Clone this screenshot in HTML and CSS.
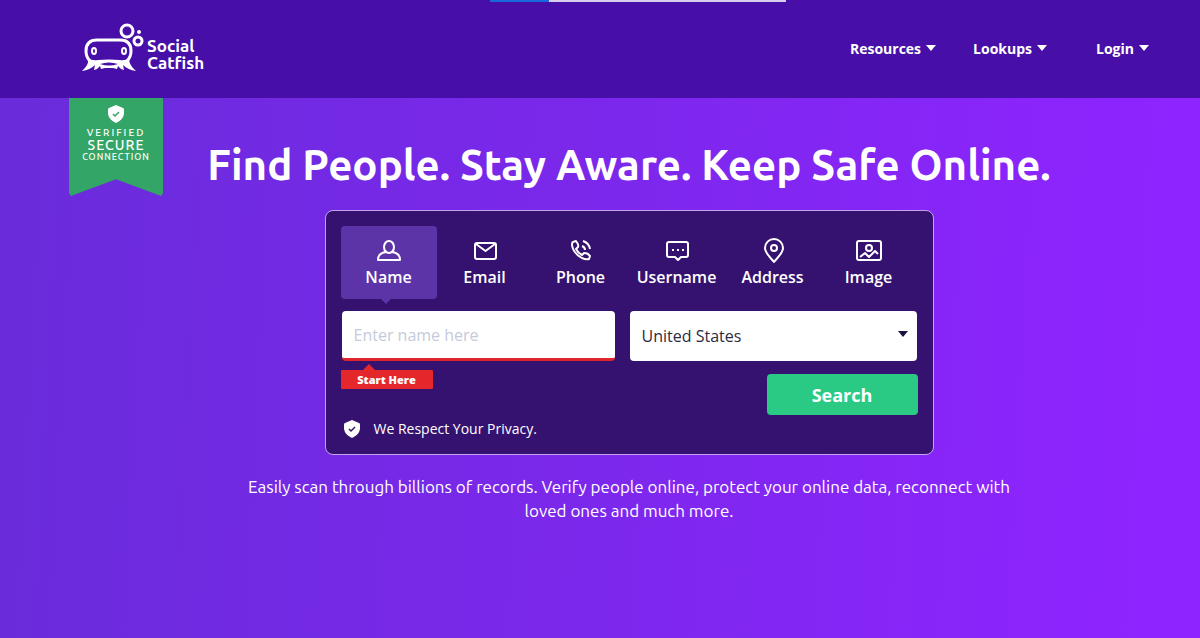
FILE: index.html
```html
<!DOCTYPE html>
<html lang="en">
<head>
<meta charset="UTF-8">
<meta name="viewport" content="width=device-width, initial-scale=1">
<title>Social Catfish</title>
<link rel="stylesheet" href="styles.css">
</head>
<body>
	<header class="header">
		<div class="progress"><div class="progress-bar"></div></div>
		<a class="logo" href="#">
			<svg width="62" height="50" viewBox="0 0 62 50" fill="none" stroke="#fff" aria-hidden="true">
				<path d="M8 38 Q4 34 4 28 Q4 17 15 17 H38 Q49 17 49 28 Q49 34 45 38" stroke-width="3"/>
				<path d="M6 35 C7 41 4 44 0 48 Q8 47 13 42 L12 47 Q16 46 18 43 L19 46 L23 45 H31 L35 46 L36 43 Q38 46 42 47 L41 42 Q46 47 54 48 C50 44 47 41 47 35 Q43 38 38 37 Q27 36 16 37 Q10 38 6 35 Z" fill="#fff" stroke="none"/>
				<path d="M18 41 Q27 38 36 41 Q27 44 18 41 Z" fill="#470fa8" stroke="none"/>
				<ellipse cx="12" cy="28" rx="2" ry="3" stroke-width="2"/>
				<ellipse cx="42" cy="28" rx="2" ry="3" stroke-width="2"/>
				<circle cx="45" cy="8" r="6" stroke-width="3"/>
				<circle cx="56" cy="18" r="4" stroke-width="3"/>
				<circle cx="57" cy="9" r="2" fill="#fff" stroke="none"/>
			</svg>
			<span class="logo-text">Social<br>Catfish</span>
		</a>
		<nav class="nav">
			<a href="#">Resources <span class="caret"></span></a>
			<a href="#">Lookups <span class="caret"></span></a>
			<a class="login" href="#">Login <span class="caret"></span></a>
		</nav>
	</header>

	<main class="hero">
		<div class="badge">
			<svg width="16" height="18" viewBox="0 0 16 18" aria-hidden="true">
				<path d="M8 0 L15 3 Q16 3 16 5 V9 Q15 15 8 18 Q1 15 0 9 V5 Q0 3 1 3 Z" fill="#fff"/>
				<path d="M5 9 L7 11 L11 7" fill="none" stroke="#33a566" stroke-width="1.5"/>
			</svg>
			<span class="badge-verified">VERIFIED</span>
			<span class="badge-secure">SECURE</span>
			<span class="badge-connection">CONNECTION</span>
		</div>

		<div class="content">
			<h1>Find People. Stay Aware. Keep Safe Online.</h1>

			<form class="search">
				<div class="tabs">
					<button type="button" class="tab active">
						<svg width="26" height="26" viewBox="0 0 26 26"><ellipse cx="13" cy="10" rx="5" ry="6"/><path d="M10 15 Q2 16 2 23 H24 Q24 16 16 15"/></svg>
						Name
					</button>
					<button type="button" class="tab">
						<svg width="26" height="26" viewBox="0 0 26 26"><rect x="3" y="6" width="21" height="16" rx="2"/><path d="M4 7 L13.5 14 L23 7"/></svg>
						Email
					</button>
					<button type="button" class="tab">
						<svg width="26" height="26" viewBox="0 0 26 26"><path d="M5 5 L8 4 Q11 8 10 10 L8 12 Q10 16 14 18 L16 16 Q20 16 22 19 L21 22 Q18 23 14 21 Q5 16 4 8 Q4 5 5 5 Z"/><path d="M14 9 Q17 10 17 13 M15 4 Q21 6 22 12"/></svg>
						Phone
					</button>
					<button type="button" class="tab">
						<svg width="26" height="26" viewBox="0 0 26 26"><path d="M5 5 H22 Q24 5 24 7 V18 Q24 20 22 20 H17 L14 23 L11 20 H5 Q3 20 3 18 V7 Q3 5 5 5 Z"/><path d="M8 13 H10 M13 13 H15 M18 13 H20"/></svg>
						Username
					</button>
					<button type="button" class="tab">
						<svg width="26" height="26" viewBox="0 0 26 26"><path d="M14 25 C10 20 5 16 5 11 A9 9 0 0 1 23 11 C23 16 18 20 14 25 Z"/><circle cx="14" cy="11" r="3"/></svg>
						Address
					</button>
					<button type="button" class="tab">
						<svg width="26" height="26" viewBox="0 0 26 26"><rect x="1" y="4" width="24" height="19" rx="2"/><circle cx="13" cy="11" r="3"/><path d="M4 20 L9 16 L13 20 L19 14 L22 17"/></svg>
						Image
					</button>
				</div>

				<div class="fields">
					<input class="field name-field" type="text" placeholder="Enter name here" aria-label="Name">
					<div class="country">
						<select class="field" aria-label="Country">
							<option>United States</option>
						</select>
						<span class="caret"></span>
					</div>
				</div>

				<div class="actions">
					<div class="hint">Start Here</div>
					<button type="submit" class="submit">Search</button>
				</div>

				<div class="privacy">
					<svg width="16" height="18" viewBox="0 0 16 18" aria-hidden="true">
						<path d="M8 0 L15 3 Q16 3 16 5 V9 Q15 15 8 18 Q1 15 0 9 V5 Q0 3 1 3 Z" fill="#fff"/>
						<path d="M5 9 L7 11 L11 7" fill="none" stroke="#35126f" stroke-width="1.5"/>
					</svg>
					We Respect Your Privacy.
				</div>
			</form>

			<p class="intro">Easily scan through billions of records. Verify people online, protect your online data, reconnect with loved ones and much more.</p>
		</div>
	</main>
</body>
</html>
```
FILE: styles.css
```css
* {
	box-sizing: border-box;
}
body {
	margin: 0;
	min-height: 100vh;
	display: flex;
	flex-direction: column;
	font-family: "Open Sans", sans-serif;
	color: #fff;
	background: linear-gradient(93deg, #692cda 0%, #7a28ea 45%, #8e24ff 95%);
}
a {
	color: inherit;
	text-decoration: none;
}
button, input, select {
	font-family: inherit;
}

/* header */
.header {
	position: relative;
	height: 98px;
	padding: 0 51px 2px 82px;
	display: flex;
	align-items: center;
	justify-content: space-between;
	background: #470fa8;
}
.progress {
	position: absolute;
	top: 0;
	left: 490px;
	width: 296px;
	height: 2px;
	background: #d9cdee;
}
.progress-bar {
	width: 20%;
	height: 2px;
	background: #1769dc;
}
.logo {
	display: flex;
	align-items: flex-end;
	gap: 3px;
}
.logo-text {
	font: bold 17px/17px "Ubuntu", "Noto Sans", sans-serif;
	padding-bottom: 2px;
}
.nav {
	display: flex;
	gap: 37px;
	font-size: 14px;
	font-weight: bold;
}
.nav a {
	display: flex;
	align-items: center;
	gap: 5px;
}
.nav .login {
	margin-left: 12px;
}
.caret {
	border: 5px solid transparent;
	border-top: 6px solid currentColor;
	border-bottom: 0;
}

/* hero */
.hero {
	flex: 1;
	display: flex;
	align-items: flex-start;
	padding: 0 105px 0 69px;
}
.badge {
	width: 94px;
	height: 98px;
	padding-top: 7px;
	display: flex;
	flex-direction: column;
	align-items: center;
	font-family: "Ubuntu", "Lato", sans-serif;
	font-weight: 500;
	background: #33a566;
	clip-path: polygon(0 0, 100% 0, 100% 97%, 98% 100%, 50% 83%, 2% 100%, 0 97%);
}
.badge-verified {
	margin-top: 4px;
	font-size: 10px;
	line-height: 12px;
	letter-spacing: 2px;
}
.badge-secure {
	font-size: 14px;
	line-height: 13px;
	letter-spacing: 1px;
}
.badge-connection {
	font-size: 9px;
	line-height: 11px;
	letter-spacing: 1px;
}
.content {
	flex: 1;
	display: flex;
	flex-direction: column;
	align-items: center;
	padding-top: 39px;
}
h1 {
	margin: 0 0 17px;
	font: bold 42px/56px "Ubuntu", "Noto Sans", sans-serif;
	white-space: nowrap;
}

/* search card */
.search {
	width: 100%;
	max-width: 609px;
	padding: 15px;
	border: 1px solid #c3a2f2;
	border-radius: 8px;
	background: #35126f;
}
.tabs {
	display: grid;
	grid-template-columns: repeat(6, 96px);
}
.tab {
	position: relative;
	height: 73px;
	padding: 0;
	display: flex;
	flex-direction: column;
	align-items: center;
	justify-content: center;
	gap: 2px;
	border: 0;
	border-radius: 4px;
	background: none;
	color: #fff;
	font-size: 16px;
	font-weight: 600;
	line-height: 24px;
}
.tab svg {
	fill: none;
	stroke: #fff;
	stroke-width: 2;
	stroke-linejoin: round;
}
.tab.active {
	background: #5c34a8;
}
.tab.active::after {
	content: "";
	position: absolute;
	top: 100%;
	left: 40px;
	border: 5px solid transparent;
	border-top-color: #5c34a8;
	border-bottom: 0;
}
.fields {
	display: grid;
	grid-template-columns: 273fr 287fr;
	gap: 15px;
	margin-top: 12px;
	padding: 0 1px;
}
.field {
	width: 100%;
	height: 50px;
	padding: 0 12px;
	border: 0;
	border-radius: 4px;
	background: #fff;
	color: #2e2a40;
	font-size: 16px;
}
.name-field {
	border-bottom: 3px solid #e0242b;
}
.name-field::placeholder {
	color: #c5cadb;
}
.country {
	position: relative;
}
.country select {
	appearance: none;
}
.country .caret {
	position: absolute;
	top: 20px;
	right: 9px;
	color: #1b1440;
	pointer-events: none;
}
.actions {
	display: flex;
	align-items: flex-start;
	justify-content: space-between;
	margin-top: 9px;
}
.hint {
	position: relative;
	width: 92px;
	border-radius: 1px;
	background: #e4272b;
	font-size: 11px;
	font-weight: 800;
	line-height: 19px;
	text-align: center;
}
.hint::before {
	content: "";
	position: absolute;
	bottom: 100%;
	left: 22px;
	border: 6px solid transparent;
	border-bottom-color: #e4272b;
	border-top: 0;
}
.submit {
	width: 151px;
	height: 41px;
	margin-top: 4px;
	border: 0;
	border-radius: 4px;
	background: #2aca84;
	color: #fff;
	font-size: 18px;
	font-weight: bold;
}
.privacy {
	display: flex;
	align-items: center;
	gap: 14px;
	padding: 4px 0 0 3px;
	font-size: 14px;
	line-height: 20px;
}

.intro {
	max-width: 780px;
	margin: 20px 0 0;
	font: 17px/24px "Ubuntu", "Noto Sans", sans-serif;
	text-align: center;
}
```
